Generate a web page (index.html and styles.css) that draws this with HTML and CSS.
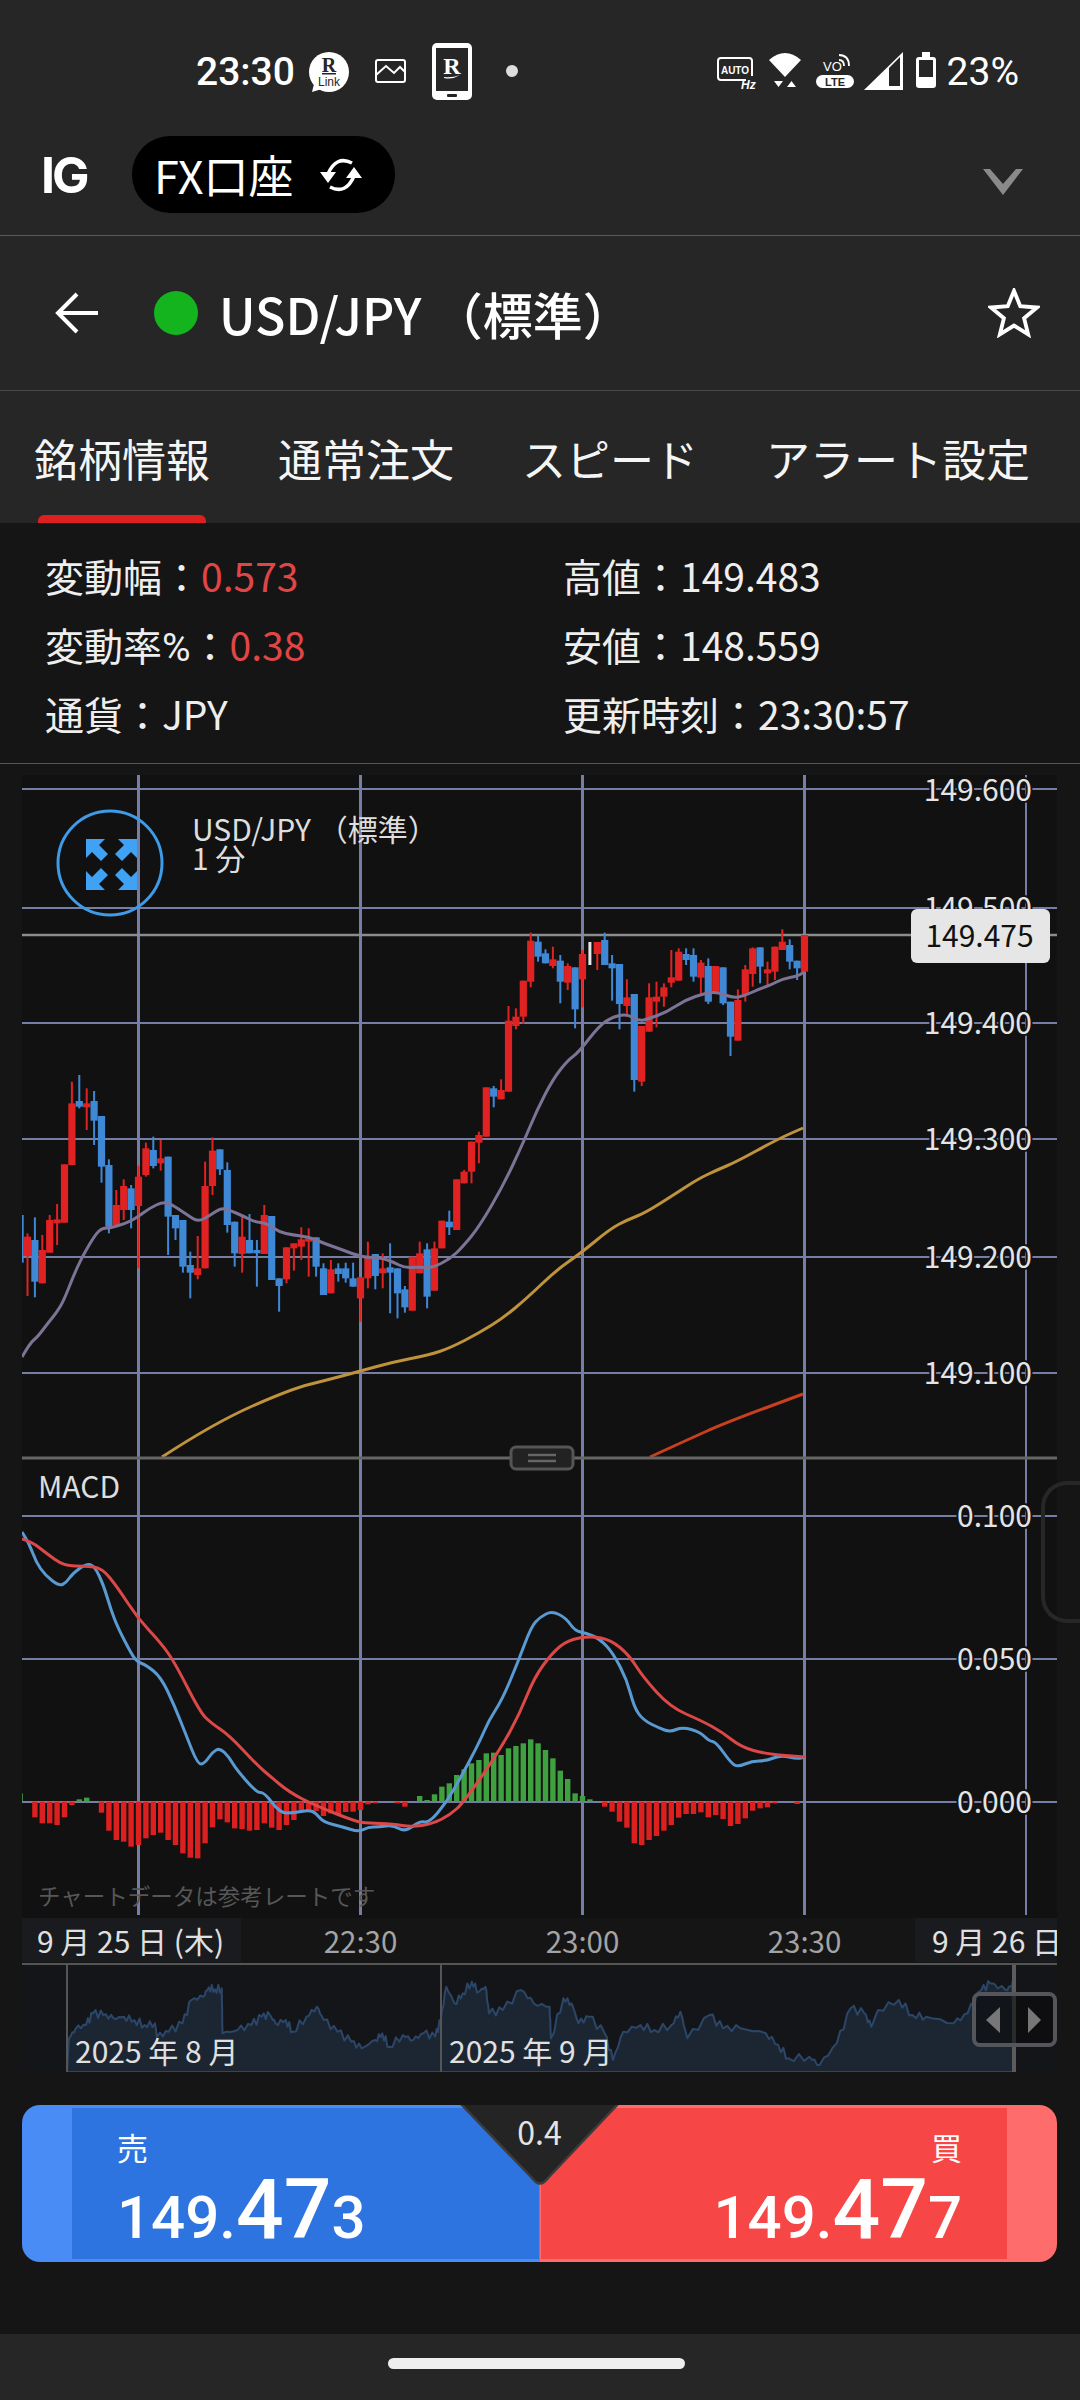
FILE: index.html
```html
<!DOCTYPE html>
<html lang="ja">
<head>
<meta charset="utf-8">
<title>USD/JPY</title>
<link rel="stylesheet" href="styles.css">
</head>
<body>

<div class="status">
  <span class="status-time">23:30</span>
  <svg class="status-left" viewBox="309 43 209 57">
    <circle cx="329" cy="72" r="20" fill="#fff"/>
    <path d="M314 84 L312 92 L322 89 Z" fill="#fff"/>
    <text class="ico-r" x="329" y="72" text-anchor="middle">R</text>
    <rect x="322" y="73" width="14" height="1.5" fill="#262626"/>
    <text class="ico-link" x="329" y="86" text-anchor="middle">Link</text>
    <rect x="376" y="60" width="29" height="22" rx="2" fill="none" stroke="#fff" stroke-width="2"/>
    <path d="M376 75 L386 66 L394 73 L400 67 L405 72" fill="none" stroke="#fff" stroke-width="2"/>
    <rect x="432" y="43" width="40" height="57" rx="5" fill="#fff"/>
    <rect x="436" y="48" width="32" height="43" fill="#262626"/>
    <rect x="447" y="94" width="10" height="3" rx="1" fill="#262626"/>
    <text class="ico-r-white" x="452" y="74" text-anchor="middle">R</text>
    <path d="M444 77 Q452 78 460 75 Q452 80 444 78 Z" fill="#fff"/>
    <circle cx="512" cy="71" r="6" fill="#ddd"/>
  </svg>
  <svg class="status-right" viewBox="716 43 219 57">
    <path d="M745 80 H720 Q717 80 717 77 V61 Q717 58 720 58 H748 Q751 58 751 61 V76" fill="none" stroke="#fff" stroke-width="2"/>
    <text class="ico-auto" x="734" y="73.5" text-anchor="middle">AUTO</text>
    <text class="ico-hz" x="740" y="89">Hz</text>
    <path d="M784 77 L768 60 Q784 46 800 60 Z" fill="#fff"/>
    <path d="M773 81 H782 L777.5 87 Z M786 87 H795 L790.5 81 Z" fill="#fff"/>
    <text class="ico-vo" x="822" y="71">VO</text>
    <path d="M838 60 Q843 60 843 66 M838 55 Q848 55 848 66" fill="none" stroke="#fff" stroke-width="1.8"/>
    <rect x="815" y="75" width="38" height="13" rx="6.5" fill="#fff"/>
    <text class="ico-lte" x="834" y="86" text-anchor="middle">LTE</text>
    <path d="M863 90 L902 52 V90 Z" fill="#fff"/>
    <path d="M888 68 L899 57 V86 H888 Z" fill="#262626"/>
    <rect x="915" y="57" width="20" height="31" rx="3" fill="#fff"/>
    <rect x="921" y="52" width="8" height="6" fill="#fff"/>
    <rect x="918" y="60" width="14" height="17" fill="#262626"/>
  </svg>
  <span class="status-batt">23%</span>
</div>

<div class="account">
  <span class="logo">IG</span>
  <span class="pill">
    FX口座
    <svg class="pill-icon" viewBox="0 0 44 44">
      <path d="M33 10 Q17 2 9 21 M11 34 Q27 42 35 23" fill="none" stroke="#fff" stroke-width="3.5"/>
      <path d="M1 19 H17 L9 30 Z M27 25 H43 L35 14 Z" fill="#fff"/>
    </svg>
  </span>
  <svg class="chevron" viewBox="0 0 40 26"><polygon points="0,0 7,0 20,15 33,0 40,0 20,26" fill="#8a8a8a"/></svg>
</div>

<div class="symbol">
  <svg class="back" viewBox="0 0 44 42"><path d="M43 21 H4 M22 2 L3 21 L22 40" fill="none" stroke="#fff" stroke-width="4"/></svg>
  <span class="dot"></span>
  <span class="symbol-name">USD/JPY （標準）</span>
  <svg class="star" viewBox="0 0 54 52"><polygon points="27,3 33.5,19 50.8,20.3 37.5,31.4 41.7,48.2 27,39 12.3,48.2 16.5,31.4 3.2,20.3 20.5,19" fill="none" stroke="#fff" stroke-width="4"/></svg>
</div>

<div class="tabs">
  <span class="tab active">銘柄情報</span>
  <span class="tab">通常注文</span>
  <span class="tab">スピード</span>
  <span class="tab">アラート設定</span>
</div>

<div class="info">
  <div>変動幅：<span class="up">0.573</span></div>
  <div>高値：149.483</div>
  <div>変動率<span class="pct">%</span>：<span class="up">0.38</span></div>
  <div>安値：148.559</div>
  <div>通貨：JPY</div>
  <div>更新時刻：23:30:57</div>
</div>

<div class="chart-wrap">
  <svg class="chart" viewBox="22 775 1035 1297">
    <rect x="22" y="775" width="1035" height="1143" fill="#111"/>

    <g class="grid-h">
      <line x1="22" x2="1057" y1="789" y2="789"/>
      <line x1="22" x2="1057" y1="908" y2="908"/>
      <line x1="22" x2="1057" y1="1023" y2="1023"/>
      <line x1="22" x2="1057" y1="1139" y2="1139"/>
      <line x1="22" x2="1057" y1="1257" y2="1257"/>
      <line x1="22" x2="1057" y1="1373" y2="1373"/>
      <line x1="22" x2="1057" y1="1516" y2="1516"/>
      <line x1="22" x2="1057" y1="1659" y2="1659"/>
      <line x1="22" x2="1057" y1="1802" y2="1802"/>
    </g>
    <g class="grid-v">
      <line x1="138.5" x2="138.5" y1="775" y2="1915"/>
      <line x1="360.5" x2="360.5" y1="775" y2="1915"/>
      <line x1="582.5" x2="582.5" y1="775" y2="1915"/>
      <line x1="804.5" x2="804.5" y1="775" y2="1915"/>
      <line class="thin" x1="1026" x2="1026" y1="775" y2="1915"/>
    </g>
    <line class="last-line" x1="22" x2="1057" y1="935" y2="935"/>

    <g id="candles"></g>
    <path class="ma ma-purple" data-points="22,1357 30,1343 37.5,1337 48,1323 57,1312 64,1300 73,1277 82,1257 95,1235 102,1228 111,1228 129,1222 137.5,1217 150,1208 162.5,1202 171,1204 186,1214 198,1222 209,1216 221,1208 229,1210 243,1216 255,1222 266,1223 279,1232 293,1235 309,1237 323,1243 343,1250 361,1257 382,1258 393,1262 405,1268 418,1267 432,1268 450,1259 462.5,1247 479,1227 503,1186 524,1141 537,1110 553,1079 568,1060 578,1053 599,1026 612,1017 627,1014 639,1021 648,1019 667,1012 685,1000 706,993 717,992 733,998 744,996 759,989 771,985 782,979 798,976 804,972"/>
    <path class="ma ma-orange" data-points="162,1457 214,1423 291,1389 327,1380 357,1372 393,1362 429,1355 450,1348 479,1333 503,1318 526,1299 556.5,1270 581,1253 610,1229 627,1220 645,1213 675,1194 698,1179 717,1170 736,1162 778,1139 803,1128"/>
    <path class="ma ma-red" data-points="650,1457 687,1440 725,1423 803,1394"/>

    <line class="panel-line" x1="22" x2="1057" y1="1458" y2="1458"/>
    <rect class="splitter" x="511" y="1447" width="62" height="22" rx="5"/>
    <path class="splitter-bars" d="M528 1455 H556 M528 1461 H556"/>

    <g class="axis">
      <text x="1032" y="788">149.600</text>
      <text x="1032" y="906">149.500</text>
      <text x="1032" y="1021">149.400</text>
      <text x="1032" y="1137">149.300</text>
      <text x="1032" y="1255">149.200</text>
      <text x="1032" y="1371">149.100</text>
      <text x="1032" y="1514">0.100</text>
      <text x="1032" y="1657">0.050</text>
      <text x="1032" y="1800">0.000</text>
    </g>
    <rect class="price-tag" x="911" y="909" width="139" height="54" rx="6"/>
    <text class="price-tag-text" x="979.5" y="934">149.475</text>

    <circle class="expand-ring" cx="110" cy="863" r="52"/>
    <g class="expand-arrows">
      <path id="arrow" d="M86 839 H105 L99 845 L108 854 L101 861 L92 852 L86 858 Z"/>
      <use href="#arrow" transform="rotate(90 111.5 864.5)"/>
      <use href="#arrow" transform="rotate(180 111.5 864.5)"/>
      <use href="#arrow" transform="rotate(270 111.5 864.5)"/>
    </g>
    <text class="chart-title" x="192" y="828">USD/JPY （標準）</text>
    <text class="chart-title" x="192" y="857">1 分</text>

    <text class="chart-title" x="38" y="1485">MACD</text>
    <g id="macd-bars"></g>
    <path class="macd-line macd-blue" data-points="22,1532 29,1543 36,1562 45,1575 59,1586 66,1583 73,1573 87.5,1563 95,1567 103.5,1585 111,1610 118,1628 132,1655 137.5,1662 146,1665 161,1677 175,1707 186,1735 198,1765 205,1763 212.5,1752 220,1748 229,1757 236,1769 257,1793 264,1792 280,1813 293,1813 309,1810 316,1813 323,1822 343,1827 359,1832 368,1827 379,1827 393,1825 405,1832 420,1821 429,1823 446,1803 461,1777 479,1743 489,1720 502,1700 518,1662 531,1627 540,1617 552,1611 566,1618 575,1631 586,1633 600,1639 613,1653 627,1680 634,1707 643,1720 659,1728 670,1732 682.5,1727 700,1732 709,1741 716,1742 731,1763 738,1767 752,1761 766,1761 781,1755 797,1759 805,1757"/>
    <path class="macd-line macd-red" data-points="22,1539 32,1542 46,1553 64,1566 86,1566 102,1568 118,1588 137.5,1618 161,1643 175,1663 200,1712 211,1723 229,1735 257,1765 271,1777 289,1792 314,1805 357,1822 368,1823 393,1824 411,1827 432,1824 450,1815 464,1802 500,1750 520,1713 534,1678 552,1653 568,1640 591,1636 611,1640 629,1655 643,1677 670,1707 702,1721 722,1732 741,1747 766,1754 805,1757"/>
    <text class="chart-note" x="38" y="1895">チャートデータは参考レートです</text>

    <rect class="date-tile" x="22" y="1918" width="219" height="44"/>
    <text class="date" x="37" y="1940">9 月 25 日 (木)</text>
    <text class="time" x="360.5" y="1940">22:30</text>
    <text class="time" x="582.5" y="1940">23:00</text>
    <text class="time" x="804.5" y="1940">23:30</text>
    <rect class="date-tile" x="915" y="1918" width="142" height="44"/>
    <text class="date" x="932" y="1940">9 月 26 日</text>

    <rect class="overview-bg" x="22" y="1964" width="1035" height="108"/>
    <line class="overview-top" x1="22" x2="1057" y1="1964" y2="1964"/>
    <path id="overview" class="overview-area"/>
    <line class="overview-sep" x1="67" x2="67" y1="1965" y2="2072"/>
    <line class="overview-sep" x1="441" x2="441" y1="1965" y2="2072"/>
    <line class="overview-now" x1="1014" x2="1014" y1="1965" y2="2072"/>
    <text class="date" x="75" y="2050">2025 年 8 月</text>
    <text class="date" x="449" y="2050">2025 年 9 月</text>
    <rect class="range-handle" x="974" y="1994" width="81" height="51" rx="6"/>
    <path class="range-arrows" d="M1000 2007 V2033 L986 2020 Z M1028 2007 V2033 L1041 2020 Z"/>
  </svg>
  <div class="edge-tab"></div>
</div>

<div class="trade">
  <div class="side sell">
    <div class="quote">
      <div class="quote-label">売</div>
      <div class="quote-price">149.<b>47</b>3</div>
    </div>
  </div>
  <div class="side buy">
    <div class="quote">
      <div class="quote-label">買</div>
      <div class="quote-price">149.<b>47</b>7</div>
    </div>
  </div>
  <div class="spread">
    <svg viewBox="0 0 157 84"><path d="M-1 -2 H158 L87 73 Q79 84 71 73 Z" fill="#242424" stroke="#3c3c3c" stroke-width="2.5"/></svg>
    <span>0.4</span>
  </div>
</div>

<div class="navbar"><span class="nav-handle"></span></div>

<script src="chart.js"></script>
</body>
</html>
```

FILE: styles.css
```css
html, body { margin: 0; padding: 0; }

body {
  width: 1080px;
  height: 2400px;
  overflow: hidden;
  display: flex;
  flex-direction: column;
  background: #151515;
  color: #f2f2f2;
  font-family: "Noto Sans CJK JP", "Noto Sans", sans-serif;
}

/* status bar */
.status {
  display: flex;
  align-items: center;
  height: 57px;
  padding: 43px 61px 10px 196px;
  background: #262626;
  font-family: Roboto, sans-serif;
  color: #fff;
}
.status-time { width: 113px; font-size: 39px; font-weight: 500; }
.status-left { width: 209px; height: 57px; }
.status-right { width: 219px; height: 57px; margin-left: auto; }
.status-batt { margin-left: 11px; font-size: 39px; }

.ico-r { font: 700 20px "Liberation Serif", serif; fill: #262626; }
.ico-r-white { font: 700 24px "Liberation Serif", serif; fill: #fff; }
.ico-link { font: 400 12px "Liberation Sans", sans-serif; fill: #262626; }
.ico-auto { font: 700 10px "Liberation Sans", sans-serif; fill: #fff; }
.ico-hz { font: italic 700 12px "Liberation Sans", sans-serif; fill: #fff; }
.ico-vo { font: 400 13px "Liberation Sans", sans-serif; fill: #fff; }
.ico-lte { font: 700 11px "Liberation Sans", sans-serif; fill: #262626; }

/* account row */
.account {
  display: flex;
  align-items: center;
  height: 77px;
  padding: 26px 0 22px 41px;
  background: #262626;
  border-bottom: 1px solid #5a5a5a;
}
.logo {
  width: 91px;
  font: 700 50px Inter, sans-serif;
  letter-spacing: -3px;
  color: #fff;
}
.pill {
  display: flex;
  align-items: center;
  width: 241px;
  height: 77px;
  padding-left: 22px;
  border-radius: 38px;
  background: #000;
  font-size: 45px;
  color: #fff;
}
.pill-icon { width: 44px; height: 44px; margin-left: 26px; }
.chevron { width: 40px; height: 26px; margin: 14px 57px 0 auto; }

/* symbol row */
.symbol {
  display: flex;
  align-items: center;
  height: 154px;
  padding-left: 55px;
  background: #262626;
  border-bottom: 1px solid #4a4a4a;
}
.back { width: 44px; height: 42px; }
.dot {
  width: 44px;
  height: 44px;
  margin-left: 55px;
  border-radius: 50%;
  background: #14b41e;
}
.symbol-name { margin-left: 21px; font-size: 50px; font-weight: 500; color: #fff; }
.star { width: 52px; height: 50px; margin: 0 40px 0 auto; }

/* tabs */
.tabs {
  display: flex;
  gap: 68px;
  height: 132px;
  padding-left: 34px;
  background: #262626;
}
.tab {
  position: relative;
  padding-top: 37px;
  font-size: 44px;
  line-height: 60px;
  color: #f5f5f5;
}
.tab.active::after {
  content: "";
  position: absolute;
  left: 4px;
  right: 4px;
  bottom: 0;
  height: 8px;
  border-radius: 6px 6px 0 0;
  background: #dc2020;
}

/* info */
.info {
  display: grid;
  grid-template-columns: 518px 1fr;
  grid-auto-rows: 69px;
  align-items: center;
  height: 223px;
  padding: 17px 0 0 45px;
  border-bottom: 1px solid #555;
  font-size: 39px;
  color: #eee;
}
.up { color: #e04646; }
.pct { font-family: Roboto, sans-serif; }

/* chart */
.chart-wrap {
  position: relative;
  padding: 11px 23px 0 22px;
}
.chart { display: block; width: 1035px; height: 1297px; }

.grid-h line { stroke: #767ea6; stroke-width: 2; }
.grid-v line { stroke: #767ea6; stroke-width: 3; }
.grid-v line.thin { stroke-width: 2; }
.last-line { stroke: #8c8c8c; stroke-width: 2.5; }
.panel-line { stroke: #666; stroke-width: 3; }
.splitter { fill: #222; stroke: #555; stroke-width: 3; }
.splitter-bars { stroke: #666; stroke-width: 2.5; fill: none; }

.ma { fill: none; stroke-width: 3; stroke-linejoin: round; }
.ma-purple { stroke: #7d7396; }
.ma-orange { stroke: #bf933c; }
.ma-red { stroke: #c8401e; }

.macd-line { fill: none; stroke-width: 3; stroke-linejoin: round; }
.macd-blue { stroke: #5a9ad2; }
.macd-red { stroke: #dc4848; }

.axis text {
  font-size: 30px;
  fill: #e4e4e4;
  text-anchor: end;
  dominant-baseline: central;
  paint-order: stroke;
  stroke: #111;
  stroke-width: 4px;
  stroke-linejoin: round;
}
.price-tag { fill: #e6e6e6; }
.price-tag-text { font-size: 30px; fill: #111; text-anchor: middle; dominant-baseline: central; }

.expand-ring { fill: none; stroke: #3f9be8; stroke-width: 3; }
.expand-arrows { fill: #3fa2f5; }
.chart-title { font-size: 30px; fill: #dedede; dominant-baseline: central; }
.chart-note { font-size: 22.5px; fill: #575757; dominant-baseline: central; }

.date-tile { fill: #1a1b1f; }
.date { font-size: 30px; fill: #e0e0e0; dominant-baseline: central; }
.time { font-size: 29.5px; fill: #a4a4a4; text-anchor: middle; dominant-baseline: central; }

.overview-bg { fill: #141519; }
.overview-top { stroke: #555; stroke-width: 2; }
.overview-area { fill: #1c2633; stroke: #2c4668; stroke-width: 2; stroke-linejoin: round; }
.overview-sep { stroke: #555; stroke-width: 2; }
.overview-now { stroke: #5c5c5c; stroke-width: 4; }
.range-handle { fill: rgba(10, 10, 10, 0.6); stroke: #54565c; stroke-width: 4; }
.range-arrows { fill: #777; }

.edge-tab {
  position: absolute;
  top: 717px;
  right: 0;
  width: 35px;
  height: 134px;
  border: 4px solid #272727;
  border-right: 0;
  border-radius: 26px 0 0 26px;
}

/* trade buttons */
.trade {
  position: relative;
  display: flex;
  height: 157px;
  margin: 33px 23px 0 22px;
  border-radius: 18px;
  overflow: hidden;
  color: #fff;
}
.side { flex: 1; display: flex; padding: 3px 0; box-sizing: border-box; }
.sell { background: #4a8cf6; padding-left: 50px; padding-right: 1px; }
.buy { background: #ff6c6c; padding-left: 1px; padding-right: 50px; }
.quote { flex: 1; padding: 0 45px; }
.sell .quote { background: #2d74e0; }
.buy .quote { background: #f64646; text-align: right; }
.quote-label { margin-top: 17px; font-size: 31px; line-height: 43px; }
.quote-price {
  font-family: Roboto, sans-serif;
  font-size: 60px;
  font-weight: 500;
  line-height: 84px;
  white-space: nowrap;
}
.quote-price b { font-size: 84px; font-weight: 500; }

.spread {
  position: absolute;
  top: 0;
  left: 439px;
  width: 157px;
  height: 84px;
  text-align: center;
}
.spread svg { position: absolute; top: 0; left: 0; width: 157px; height: 84px; overflow: visible; }
.spread span {
  position: relative;
  display: block;
  margin-top: 8px;
  font-size: 32px;
  line-height: 36px;
  color: #e4e4e4;
}

/* nav bar */
.navbar {
  display: flex;
  justify-content: center;
  height: 42px;
  margin-top: auto;
  padding: 24px 7px 0 0;
  background: #262626;
}
.nav-handle { width: 297px; height: 11px; border-radius: 6px; background: #eee; }
```

FILE: chart.js
```js
var NS = 'http://www.w3.org/2000/svg';
var COLORS = { r: '#e02222', b: '#3f88d6', w: '#e8e8e8', g: '#3fa03f' };

function barX(i) { return 804.5 - 7.4 * (106 - i); }
function py(v) { return 900 + v / 3; }
function my(v) { return 1480 + v / 3; }

function addRect(parent, x, y, w, h, fill) {
  var r = document.createElementNS(NS, 'rect');
  r.setAttribute('x', x);
  r.setAttribute('y', y);
  r.setAttribute('width', w);
  r.setAttribute('height', Math.max(h, 0));
  r.setAttribute('fill', fill);
  parent.appendChild(r);
}

// colour, body top, body bottom, wick top, wick bottom (1/3 px from y=900)
var candles = [
  ['b',945,1088],['r',1010,1068,1000,1188],['b',1020,1145,952,1192],['r',1050,1150,1005,1150],
  ['r',960,1058,945,1058],['r',958,970,912,1035],['r',793,968],['r',610,795,545,795],
  ['b',603,620,525,625],['r',610,622,565,690],['b',603,662,573,735],['b',648,800,648,848],
  ['b',795,980,778,1000],['r',915,975,870,975],['r',858,930,838,960],['b',865,930,855,985],
  ['r',830,918,797,1105],['r',745,825,728,830],['b',750,798,710,805],['r',775,790,720,812],
  ['b',770,950,770,1065],['b',945,985,945,1020],['b',960,1100,960,1118],['b',1095,1118,1055,1195],
  ['r',1105,1125,1008,1138],['r',858,1105,785,1105],['r',752,858,712,885],['b',748,808,748,825],
  ['b',810,975,787,998],['b',965,1060,965,1100],['r',1010,1062,950,1118],['b',1020,1060,942,1060],
  ['b',1050,1060,1020,1160],['r',945,1062,915,1062],['b',948,1140],['b',1135,1158,1135,1235],
  ['r',1042,1138,1042,1150],['r',1030,1045,1030,1112],['r',1018,1040,982,1080],['r',1015,1025,985,1130],
  ['b',1012,1100,1012,1130],['b',1105,1185,1090,1185],['r',1108,1180,1080,1180],['b',1105,1122,1090,1145],
  ['b',1105,1135,1088,1148],['b',1135,1160,1088,1160],['r',1132,1195,1132,1265],['r',1070,1135,1025,1165],
  ['b',1062,1128,1062,1168],['r',1105,1120,1060,1165],['b',1102,1118,1030,1240],['b',1105,1180,1105,1255],
  ['b',1168,1222,1158,1238],['r',1070,1232],['r',1060,1120,1025,1120],['b',1048,1190,1030,1225],
  ['r',1045,1172,1025,1172],['r',962,1045],['b',965,982,932,1005],['r',838,990],
  ['r',815,850,810,850],['r',725,815,725,850],['r',705,728,695,790],['r',562,710],
  ['b',565,590,558,622],['r',570,598,538,598],['r',362,575,318,575],['r',350,378,325,388],
  ['r',242,350,242,372],['r',122,245,98,262],['b',125,170,108,185],['b',160,190,148,190],
  ['r',178,198,140,205],['b',182,245,165,310],['r',198,248,190,270],['b',202,328,202,385],
  ['r',162,238,150,322],['w',126,195],['r',126,162,126,210],['b',120,195,98,195],
  ['b',190,205,165,302],['b',192,312,192,388],['r',292,318,238,350],['b',282,540,282,575],
  ['r',378,545,378,558],['r',292,395,250,395],['r',290,305,245,382],['r',262,290,250,320],
  ['r',232,248,150,262],['r',155,242,145,242],['b',162,180,145,195],['b',165,230,145,245],
  ['r',188,233,180,285],['b',198,305,175,312],['r',198,282],['b',202,310,202,315],
  ['b',305,410,305,468],['r',300,422,268,422],['r',208,285,195,305],['r',145,222,142,260],
  ['b',142,200,142,250],['r',208,220,185,255],['r',140,215,140,240],['r',125,150,88,150],
  ['b',135,185,118,208],['b',182,205,182,240],['r',105,215]
];

var candleLayer = document.getElementById('candles');
candles.forEach(function (c, i) {
  var x = barX(i);
  var top = c[3] === undefined ? c[1] : c[3];
  var bot = c[4] === undefined ? c[2] : c[4];
  if (c[0] === 'w') {
    addRect(candleLayer, x - 1.5, py(c[1]), 3, (c[2] - c[1]) / 3, COLORS.w);
    return;
  }
  addRect(candleLayer, x - 1, py(top), 2, (bot - top) / 3, COLORS[c[0]]);
  addRect(candleLayer, x - 3.6, py(c[1]), 7.2, (c[2] - c[1]) / 3, COLORS[c[0]]);
});

// histogram, end of each bar (1/3 px from y=1480); zero is 965
var macd = [
  940,965,1012,1030,1030,1035,1012,975,958,953,965,998,1052,1080,1085,1100,1095,1075,1065,1058,
  1080,1095,1120,1133,1135,1090,1042,1018,1027,1045,1047,1052,1050,1030,1043,1050,1035,1020,990,990,
  993,1008,1000,1003,996,995,990,973,970,965,965,970,980,965,948,960,943,920,910,885,
  868,850,840,820,818,825,805,798,790,778,790,810,835,872,897,940,948,958,965,980,
  995,1025,1043,1090,1095,1080,1068,1052,1035,1013,1002,1002,997,1012,1005,1017,1038,1032,1015,992,
  985,982,970,965,965,972,965
];

var barLayer = document.getElementById('macd-bars');
macd.forEach(function (v, i) {
  if (v === 965) return;
  var x = barX(i) - 2.7;
  if (v < 965) addRect(barLayer, x, my(v), 5.4, (965 - v) / 3, COLORS.g);
  else addRect(barLayer, x, my(965), 5.4, (v - 965) / 3, '#dc2020');
});

// smooth the indicator lines: each point becomes a curve control, midpoints are the joints
document.querySelectorAll('[data-points]').forEach(function (el) {
  var pts = el.getAttribute('data-points').split(' ').map(function (p) {
    return p.split(',').map(Number);
  });
  var d = 'M' + pts[0].join(' ');
  for (var i = 1; i < pts.length - 1; i++) {
    var mx = (pts[i][0] + pts[i + 1][0]) / 2;
    var my2 = (pts[i][1] + pts[i + 1][1]) / 2;
    d += ' Q' + pts[i].join(' ') + ' ' + mx + ' ' + my2;
  }
  d += ' L' + pts[pts.length - 1].join(' ');
  el.setAttribute('d', d);
});

// overview area: x in px * 1.452, y in 1/3 px from y=1900
var overview = [
  [100,415],[110,385],[125,375],[135,340],[150,345],[165,355],[180,350],[195,360],[210,375],[225,370],
  [228,410],[245,395],[265,370],[278,300],[295,290],[303,262],[312,268],[322,265],[323,400],[345,390],
  [365,375],[380,350],[392,345],[400,370],[415,360],[425,395],[445,350],[460,320],[470,360],[490,395],
  [510,425],[525,445],[545,420],[555,400],[565,440],[585,405],[600,420],[615,400],[632,410],[640,360],
  [648,260],[660,310],[672,280],[685,245],[695,275],[705,260],[710,340],[730,330],[757,270],[775,310],
  [798,320],[800,415],[818,295],[830,310],[840,370],[855,350],[878,400],[890,480],[905,395],[930,375],
  [950,390],[975,375],[988,335],[998,415],[1030,345],[1050,385],[1075,385],[1112,400],[1130,435],[1145,475],
  [1175,470],[1190,495],[1215,430],[1235,325],[1255,340],[1265,380],[1275,330],[1305,300],[1325,345],[1345,350],
  [1385,370],[1405,340],[1425,270],[1438,250],[1460,270],[1470,255]
];

var d = 'M67 2072';
overview.forEach(function (p, i) {
  var next = overview[i + 1] || p;
  var steps = 4;
  for (var s = 0; s < steps; s++) {
    var t = s / steps;
    var zx = p[0] + (next[0] - p[0]) * t;
    var zy = p[1] + (next[1] - p[1]) * t + (s ? Math.sin(i * 7 + s * 3) * 12 : 0);
    d += ' L' + (zx / 1.452).toFixed(1) + ' ' + (1900 + zy / 3).toFixed(1);
  }
});
d += ' L1014 2072 Z';
document.getElementById('overview').setAttribute('d', d);
```
